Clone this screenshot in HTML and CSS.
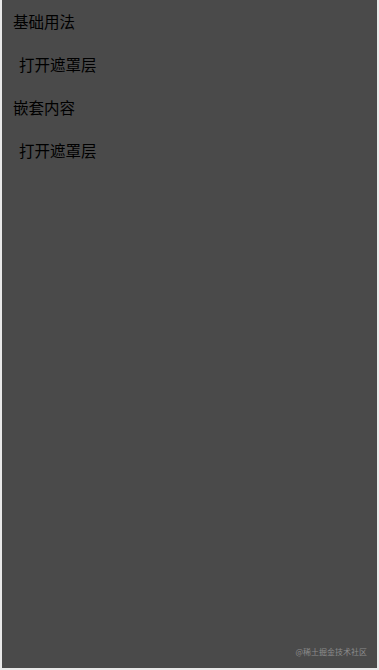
FILE: index.html
```html
<!DOCTYPE html>
<html lang="zh">
<head>
<meta charset="utf-8">
<link rel="stylesheet" href="styles.css">
</head>
<body>
<div class="frame">
  <div class="content">
    <div class="title">基础用法</div>
    <div class="btn">打开遮罩层</div>
    <div class="title">嵌套内容</div>
    <div class="btn">打开遮罩层</div>
  </div>
  <div class="watermark">@稀土掘金技术社区</div>
</div>
</body>
</html>
```
FILE: styles.css
```css
html, body {
  margin: 0;
  padding: 0;
  background: #e9e9e9;
  width: 379px;
  height: 670px;
  overflow: hidden;
}
.frame {
  margin: 0 2px 0 2px;
  height: 668px;
  background: #4a4a4a;
  display: flex;
  flex-direction: column;
  justify-content: space-between;
  font-family: "Noto Sans CJK SC", "Noto Sans", sans-serif;
  color: #000;
}
.content {
  display: flex;
  flex-direction: column;
  padding: 10px 0 0 11px;
}
.title, .btn {
  font-size: 15.5px;
  line-height: 22px;
  height: 43px;
}
.btn {
  padding-left: 6px;
}
.watermark {
  align-self: flex-end;
  font-size: 8px;
  line-height: 12px;
  color: #8c8c8c;
  padding: 0 10px 10px 0;
}
```
